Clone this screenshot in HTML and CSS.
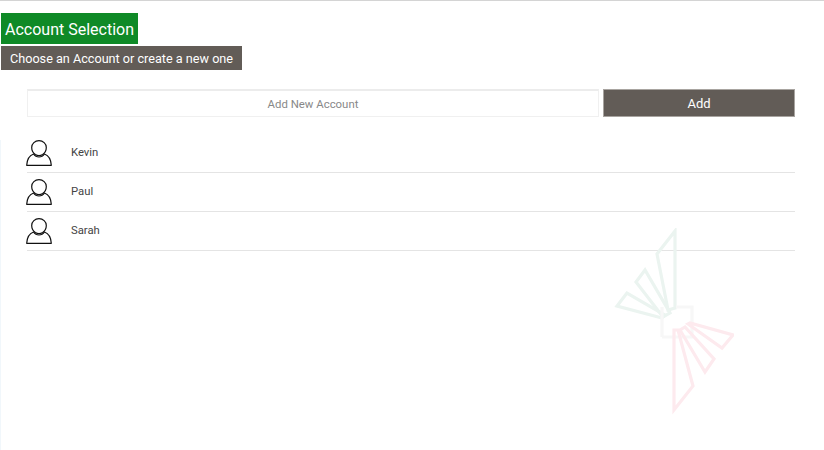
FILE: index.html
```html
<!DOCTYPE html>
<html lang="en">
<head>
<meta charset="utf-8">
<title>Account Selection</title>
<link rel="stylesheet" href="styles.css">
</head>
<body>
<header class="head">
  <h1 class="title">Account Selection</h1>
  <p class="subtitle">Choose an Account or create a new one</p>
</header>
<main class="content">
  <form class="add-form">
    <input class="add-input" type="text" placeholder="Add New Account">
    <button class="add-btn" type="button">Add</button>
  </form>
  <ul class="accounts">
    <li class="account">
      <svg class="avatar" viewBox="0 0 26 26"><use href="#person"/></svg>
      <span class="name">Kevin</span>
    </li>
    <li class="account">
      <svg class="avatar" viewBox="0 0 26 26"><use href="#person"/></svg>
      <span class="name">Paul</span>
    </li>
    <li class="account">
      <svg class="avatar" viewBox="0 0 26 26"><use href="#person"/></svg>
      <span class="name">Sarah</span>
    </li>
  </ul>
</main>
<svg class="defs" width="0" height="0">
  <symbol id="person" viewBox="0 0 26 26">
    <path d="M13 .7c4 0 7.300 2.800 7.300 6.700 0 3-1.600 5.500-3.600 7-2.200 1.500-5.200 1.500-7.400 0-2-1.500-3.600-4-3.600-7C5.700 3.500 9 .7 13 .7z" fill="none" stroke="#111" stroke-width="1.200"/>
    <path d="M7.500 14C3.500 15.500 1 19 .7 25.300h24.600C25 19 22.500 15.500 18.500 14c-1.400 2-3.400 3-5.500 3s-4.100-1-5.500-3z" fill="none" stroke="#111" stroke-width="1.200" stroke-linejoin="round"/>
  </symbol>
</svg>
<svg class="watermark" viewBox="0 0 130 190" width="130" height="190">
  <g fill="none" stroke-width="3.200" stroke-linejoin="miter">
    <g stroke="#ebf4f0">
      <path d="M71 3 53 26 64 82 71 80z"/>
      <path d="M41 42 32 54 59 89 66 85z"/>
      <path d="M23 65 13 78 58 90 61 87z"/>
    </g>
    <path d="M58 79V109M58 109H88V79H72" stroke="#f7f7f7"/>
    <g stroke="#fdeaee">
      <path d="M70 102V182L89 158 74 102z"/>
      <path d="M76 102 101 144 110 131 81 99z"/>
      <path d="M84 96 118 120 129 107 86 95z"/>
    </g>
  </g>
</svg>
</body>
</html>
```
FILE: styles.css
```css
* {
  box-sizing: border-box;
}

html,
body {
  height: 100%;
}

body {
  margin: 0;
  position: relative;
  overflow: hidden;
  background: linear-gradient(to right, #f1f7fb 1px, #fff 1px) 0 140px no-repeat #fff;
  border-top: 1px solid #d4d4d4;
  font-family: Roboto, "Liberation Sans", sans-serif;
  color: #444;
}

.head {
  display: flex;
  flex-direction: column;
  align-items: flex-start;
  gap: 2px;
  padding: 12px 0 0 1px;
}

.title {
  margin: 0;
  height: 31px;
  padding: 0 4px 0 4px;
  background: #0f8a27;
  color: #fff;
  font-size: 16px;
  font-weight: 400;
  line-height: 33px;
}

.subtitle {
  margin: 0;
  height: 24px;
  padding: 0 9px;
  background: #625c57;
  color: #fff;
  font-size: 12.650px;
  line-height: 25px;
}

.content {
  padding: 19px 29px 0 27px;
}

.add-form {
  display: flex;
  align-items: flex-start;
  gap: 4px;
}

.add-input {
  flex: 1;
  height: 28px;
  margin: 0;
  padding: 1px 0 0;
  border: 1px solid #f0f0f0;
  border-top: 2px solid #ececec;
  background: #fff;
  font: 11.400px Roboto, "Liberation Sans", sans-serif;
  text-align: center;
  outline: none;
}

.add-input::placeholder {
  color: #888;
  opacity: 1;
}

.add-btn {
  width: 192px;
  height: 28px;
  margin: 0;
  padding: 0;
  border: 1px solid #a8a4a0;
  background: #625c57;
  color: #fff;
  font: 13px Roboto, "Liberation Sans", sans-serif;
}

.accounts {
  list-style: none;
  margin: 17px 0 0;
  padding: 0;
}

.account {
  display: flex;
  align-items: center;
  height: 39px;
  border-bottom: 1px solid #e4e4e4;
}

.avatar {
  flex: none;
  width: 26px;
  height: 26px;
  margin-left: -1px;
}

.name {
  margin-left: 19px;
  margin-top: -1px;
  font-size: 11.300px;
  color: #444;
}

.defs {
  position: absolute;
}

.watermark {
  position: absolute;
  left: 604px;
  top: 227px;
  filter: blur(.7px);
}
```
